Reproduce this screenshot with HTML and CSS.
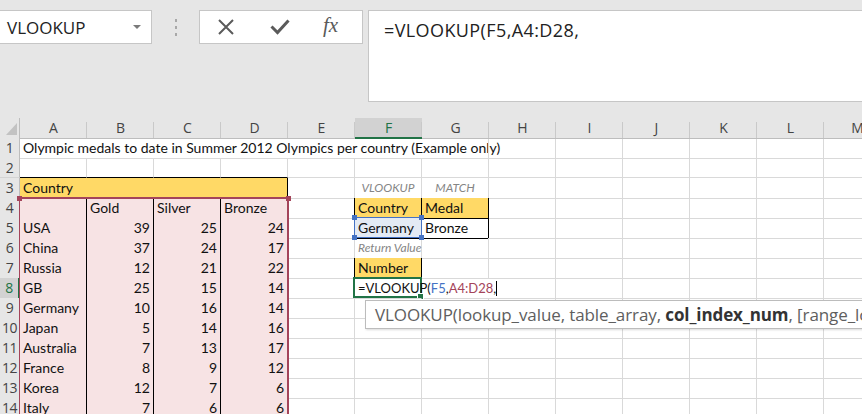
FILE: index.html
```html
<!DOCTYPE html>
<html>
<head>
<meta charset="utf-8">
<link rel="stylesheet" href="styles.css">
</head>
<body>
<div class="bar">
  <div class="namebox">
    <span class="nametext">VLOOKUP</span>
    <svg class="caret" width="8" height="5" viewBox="0 0 8 5"><path d="M0 0 L8 0 L4 4 Z" fill="#7a7a7a"/></svg>
  </div>
  <div class="grip"><i></i><i></i><i></i></div>
  <div class="btns">
    <svg class="icon" width="18" height="16" viewBox="0 0 18 16"><path d="M2 1 L16 15 M16 1 L2 15" stroke="#5a5a5a" stroke-width="2" fill="none"/></svg>
    <svg class="icon" width="20" height="16" viewBox="0 0 20 16"><path d="M1.5 7.5 L7.5 13.5 L18.5 1.5" stroke="#5a5a5a" stroke-width="3" fill="none"/></svg>
    <span class="fx">fx</span>
  </div>
  <div class="formula">=VLOOKUP(F5,A4:D28,</div>
</div>

<div class="sheet">
  <div class="row head">
    <div class="corner"><svg width="20" height="20" viewBox="0 0 20 20"><path d="M6 17 L17 17 L17 5 Z" fill="#c2c2c2"/></svg></div>
    <div class="ch">A</div><div class="ch">B</div><div class="ch">C</div><div class="ch">D</div><div class="ch">E</div><div class="ch sel">F</div><div class="ch">G</div><div class="ch">H</div><div class="ch">I</div><div class="ch">J</div><div class="ch">K</div><div class="ch">L</div><div class="ch">M</div>
  </div>
  <div class="row">
    <div class="rh">1</div>
    <div class="c nr">Olympic medals to date in Summer 2012 Olympics per country (Example only)</div><div class="c nr"></div><div class="c nr"></div><div class="c nr"></div><div class="c nr"></div><div class="c nr"></div><div class="c"></div><div class="c"></div><div class="c"></div><div class="c"></div><div class="c"></div><div class="c"></div><div class="c"></div>
  </div>
  <div class="row">
    <div class="rh">2</div>
    <div class="c kb"></div><div class="c kb"></div><div class="c kb"></div><div class="c kb"></div><div class="c"></div><div class="c"></div><div class="c"></div><div class="c"></div><div class="c"></div><div class="c"></div><div class="c"></div><div class="c"></div><div class="c"></div>
  </div>
  <div class="row">
    <div class="rh">3</div>
    <div class="c y nr kb">Country</div><div class="c y nr kb"></div><div class="c y nr kb"></div><div class="c y kr kb"></div><div class="c"></div><div class="c kb lbl ctr">VLOOKUP</div><div class="c kb lbl ctr">MATCH</div><div class="c"></div><div class="c"></div><div class="c"></div><div class="c"></div><div class="c"></div><div class="c"></div>
  </div>
  <div class="row">
    <div class="rh">4</div>
    <div class="c p kr kb"></div><div class="c p kr kb">Gold</div><div class="c p kr kb">Silver</div><div class="c p kr kb">Bronze</div><div class="c kr"></div><div class="c y kr kb">Country</div><div class="c y kr kb">Medal</div><div class="c"></div><div class="c"></div><div class="c"></div><div class="c"></div><div class="c"></div><div class="c"></div>
  </div>
  <div class="row">
    <div class="rh">5</div>
    <div class="c p kr kb">USA</div><div class="c p kr kb n">39</div><div class="c p kr kb n">25</div><div class="c p kr kb n">24</div><div class="c kr"></div><div class="c b kr kb">Germany</div><div class="c kr kb">Bronze</div><div class="c"></div><div class="c"></div><div class="c"></div><div class="c"></div><div class="c"></div><div class="c"></div>
  </div>
  <div class="row">
    <div class="rh">6</div>
    <div class="c p kr kb">China</div><div class="c p kr kb n">37</div><div class="c p kr kb n">24</div><div class="c p kr kb n">17</div><div class="c"></div><div class="c kb lbl">Return Value</div><div class="c"></div><div class="c"></div><div class="c"></div><div class="c"></div><div class="c"></div><div class="c"></div><div class="c"></div>
  </div>
  <div class="row">
    <div class="rh">7</div>
    <div class="c p kr kb">Russia</div><div class="c p kr kb n">12</div><div class="c p kr kb n">21</div><div class="c p kr kb n">22</div><div class="c kr"></div><div class="c y kr kb">Number</div><div class="c"></div><div class="c"></div><div class="c"></div><div class="c"></div><div class="c"></div><div class="c"></div><div class="c"></div>
  </div>
  <div class="row">
    <div class="rh rsel">8</div>
    <div class="c p kr kb">GB</div><div class="c p kr kb n">25</div><div class="c p kr kb n">15</div><div class="c p kr kb n">14</div><div class="c"></div><div class="c nr edit">=VLOOKUP(<span class="rf1">F5</span>,<span class="rf2">A4:D28</span>,<span class="cur"></span></div><div class="c nr"></div><div class="c"></div><div class="c"></div><div class="c"></div><div class="c"></div><div class="c"></div><div class="c"></div>
  </div>
  <div class="row">
    <div class="rh">9</div>
    <div class="c p kr kb">Germany</div><div class="c p kr kb n">10</div><div class="c p kr kb n">16</div><div class="c p kr kb n">14</div><div class="c"></div><div class="c"></div><div class="c"></div><div class="c"></div><div class="c"></div><div class="c"></div><div class="c"></div><div class="c"></div><div class="c"></div>
  </div>
  <div class="row">
    <div class="rh">10</div>
    <div class="c p kr kb">Japan</div><div class="c p kr kb n">5</div><div class="c p kr kb n">14</div><div class="c p kr kb n">16</div><div class="c"></div><div class="c"></div><div class="c"></div><div class="c"></div><div class="c"></div><div class="c"></div><div class="c"></div><div class="c"></div><div class="c"></div>
  </div>
  <div class="row">
    <div class="rh">11</div>
    <div class="c p kr kb">Australia</div><div class="c p kr kb n">7</div><div class="c p kr kb n">13</div><div class="c p kr kb n">17</div><div class="c"></div><div class="c"></div><div class="c"></div><div class="c"></div><div class="c"></div><div class="c"></div><div class="c"></div><div class="c"></div><div class="c"></div>
  </div>
  <div class="row">
    <div class="rh">12</div>
    <div class="c p kr kb">France</div><div class="c p kr kb n">8</div><div class="c p kr kb n">9</div><div class="c p kr kb n">12</div><div class="c"></div><div class="c"></div><div class="c"></div><div class="c"></div><div class="c"></div><div class="c"></div><div class="c"></div><div class="c"></div><div class="c"></div>
  </div>
  <div class="row">
    <div class="rh">13</div>
    <div class="c p kr kb">Korea</div><div class="c p kr kb n">12</div><div class="c p kr kb n">7</div><div class="c p kr kb n">6</div><div class="c"></div><div class="c"></div><div class="c"></div><div class="c"></div><div class="c"></div><div class="c"></div><div class="c"></div><div class="c"></div><div class="c"></div>
  </div>
  <div class="row">
    <div class="rh">14</div>
    <div class="c p kr kb">Italy</div><div class="c p kr kb n">7</div><div class="c p kr kb n">6</div><div class="c p kr kb n">6</div><div class="c"></div><div class="c"></div><div class="c"></div><div class="c"></div><div class="c"></div><div class="c"></div><div class="c"></div><div class="c"></div><div class="c"></div>
  </div>

  <div class="range"><i class="h tl"></i><i class="h tr"></i></div>
  <div class="ref"><i class="h tl"></i><i class="h tr"></i><i class="h bl"></i><i class="h br"></i></div>
  <div class="active"><i class="fill"></i></div>
  <div class="tip">VLOOKUP(lookup_value, table_array, <b>col_index_num</b>, [range_lookup])</div>
</div>
</body>
</html>
```
FILE: styles.css
```css
html, body {
  margin: 0;
  padding: 0;
  background: #ffffff;
  overflow: hidden;
  width: 862px;
  height: 414px;
}

.bar {
  display: flex;
  align-items: flex-start;
  height: 108px;
  padding-top: 10px;
  background: #e6e6e6;
  font-family: "Open Sans", "Noto Sans", sans-serif;
}

.namebox {
  box-sizing: border-box;
  width: 152px;
  height: 34px;
  background: #fff;
  border: 1px solid #c6c6c6;
  border-left: none;
  display: flex;
  align-items: center;
  justify-content: space-between;
  padding: 0 10px 0 7px;
}

.nametext {
  font-size: 17px;
  color: #222;
}

.caret { margin-top: 1px; }

.grip {
  width: 47px;
  height: 34px;
  display: flex;
  flex-direction: column;
  align-items: center;
  justify-content: center;
  gap: 4px;
}
.grip i {
  display: block;
  width: 2px;
  height: 3px;
  background: #a8a8a8;
}

.btns {
  box-sizing: border-box;
  width: 164px;
  height: 34px;
  background: #fff;
  border: 1px solid #c6c6c6;
  display: flex;
  align-items: center;
  padding-left: 17px;
  gap: 35px;
}
.fx {
  font-family: "Liberation Serif", serif;
  font-style: italic;
  font-size: 21px;
  color: #5a5a5a;
  margin-left: -2px;
  margin-top: -3px;
}

.formula {
  box-sizing: border-box;
  flex: 1;
  height: 92px;
  margin-left: 5px;
  background: #fff;
  border: 1px solid #c6c6c6;
  border-right: none;
  padding: 6px 0 0 15px;
  font-size: 18px;
  letter-spacing: 0.4px;
  color: #222;
  line-height: 26px;
}

.sheet {
  position: relative;
  font-family: "Lato", "Liberation Sans", sans-serif;
  font-size: 14px;
  color: #111;
}

.row {
  display: grid;
  grid-template-columns: 20px repeat(13, 67px);
  height: 20px;
}

.head {
  background: #e6e6e6;
  font-family: "Open Sans", "Noto Sans", sans-serif;
}
.corner {
  box-sizing: border-box;
  border-bottom: 1px solid #bdbdbd;
  border-right: 1px solid #bdbdbd;
}
.corner svg { display: block; }
.ch {
  box-sizing: border-box;
  position: relative;
  border-bottom: 1px solid #bdbdbd;
  text-align: center;
  font-size: 14px;
  line-height: 19px;
  color: #444;
}
.ch::after {
  content: "";
  position: absolute;
  right: 0;
  top: 4px;
  bottom: 0;
  width: 1px;
  background: #c9c9c9;
}
.ch.sel {
  background: #d2d2d2;
  color: #217346;
  border-bottom: 2px solid #217346;
}

.rh {
  box-sizing: border-box;
  background: #e6e6e6;
  border-right: 1px solid #bdbdbd;
  border-bottom: 1px solid #d4d4d4;
  text-align: center;
  font-family: "Open Sans", "Noto Sans", sans-serif;
  font-size: 14px;
  line-height: 19px;
  color: #444;
  letter-spacing: -0.5px;
}
.rh.rsel {
  background: #d2d2d2;
  color: #217346;
  border-right: 2px solid #217346;
}

.c {
  box-sizing: border-box;
  border-right: 1px solid #d9d9d9;
  border-bottom: 1px solid #d9d9d9;
  padding: 0 3px;
  line-height: 20px;
  white-space: nowrap;
  overflow: visible;
}
.n { text-align: right; }
.ctr { text-align: center; }
.nr { border-right-color: transparent; }
.kr { border-right-color: #000; }
.kb { border-bottom-color: #000; }
.y { background: #ffd966; }
.p { background: #f7e3e4; }
.b { background: #e3eaf4; }

.lbl {
  font-style: italic;
  font-size: 12px;
  color: #858585;
}

.edit { position: relative; z-index: 2; font-size: 13px; }
.rf1 { color: #4472c4; }
.rf2 { color: #a4445a; }
.cur {
  display: inline-block;
  width: 1px;
  height: 15px;
  background: #000;
  vertical-align: -3px;
}

.range {
  position: absolute;
  left: 19px;
  top: 79px;
  width: 270px;
  height: 400px;
  box-sizing: border-box;
  border: 2px solid #a4445a;
  border-left-width: 1px;
  pointer-events: none;
}
.h {
  position: absolute;
  width: 5px;
  height: 5px;
}
.range .h { background: #a4445a; }
.range .tl { left: -3px; top: -3px; }
.range .tr { right: -4px; top: -3px; }

.ref {
  position: absolute;
  left: 354px;
  top: 99px;
  width: 68px;
  height: 21px;
  box-sizing: border-box;
  border: 1px solid #4472c4;
}
.ref .h { background: #4472c4; }
.ref .tl { left: -3px; top: -3px; }
.ref .tr { right: -3px; top: -3px; }
.ref .bl { left: -3px; bottom: -3px; }
.ref .br { right: -3px; bottom: -3px; }

.active {
  position: absolute;
  left: 353px;
  top: 159px;
  width: 69px;
  height: 21px;
  box-sizing: border-box;
  border: 2px solid #217346;
}
.active .fill {
  position: absolute;
  right: -4px;
  bottom: -4px;
  width: 5px;
  height: 5px;
  background: #217346;
  border: 1px solid #fff;
}

.tip {
  position: absolute;
  left: 365px;
  top: 182px;
  width: 620px;
  height: 29px;
  box-sizing: border-box;
  background: #fff;
  border: 1px solid #bcbcbc;
  box-shadow: 1px 1px 2px rgba(0,0,0,0.15);
  padding-left: 9px;
  font-family: "Open Sans", "Noto Sans", sans-serif;
  font-size: 17px;
  letter-spacing: -0.1px;
  line-height: 27px;
  color: #5e5e5e;
  white-space: nowrap;
  z-index: 3;
}
.tip b { color: #333; font-weight: 700; }
```
